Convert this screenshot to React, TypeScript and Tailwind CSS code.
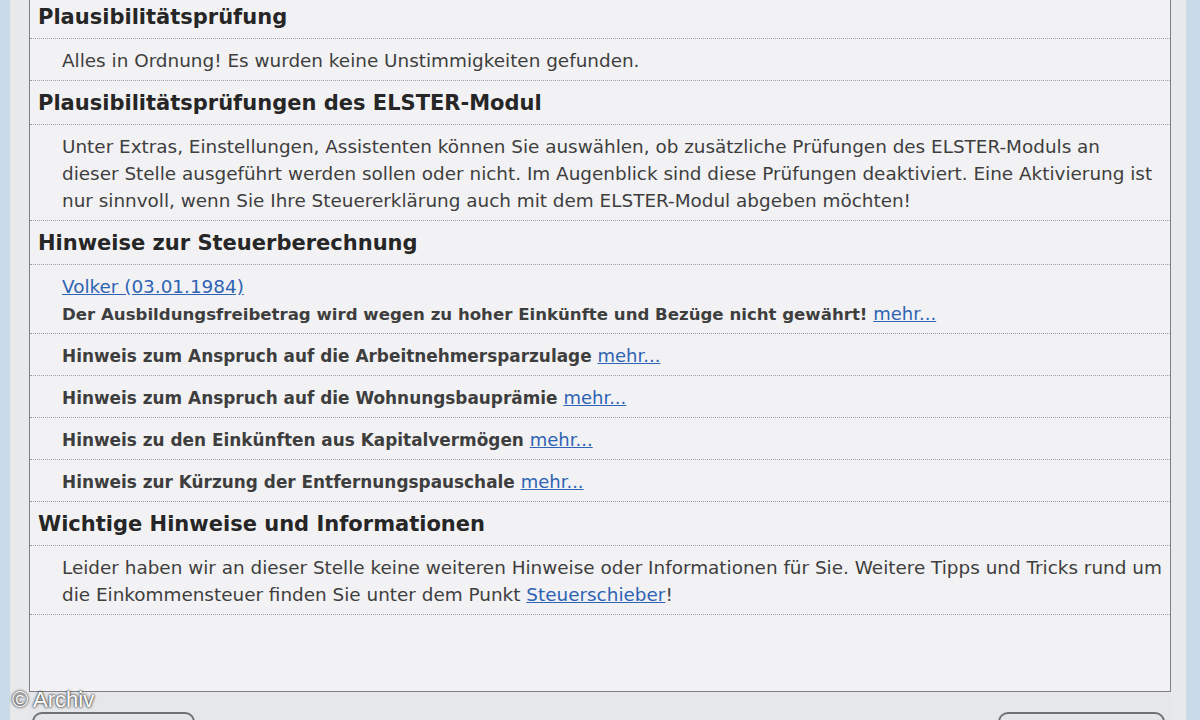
import type { ReactNode } from "react";

const hinweise = [
  "Hinweis zum Anspruch auf die Arbeitnehmersparzulage",
  "Hinweis zum Anspruch auf die Wohnungsbauprämie",
  "Hinweis zu den Einkünften aus Kapitalvermögen",
  "Hinweis zur Kürzung der Entfernungspauschale",
];

function Heading({ children, first }: { children: ReactNode; first?: boolean }) {
  return (
    <div
      className={`border-b border-dotted border-[#9c9ea3] px-[8px] ${first ? "pt-[4px]" : "pt-[9px]"} pb-[7px] text-[21px] font-bold leading-[27px] text-[#262626]`}
    >
      {children}
    </div>
  );
}

function Row({ children }: { children: ReactNode }) {
  return (
    <div className="border-b border-dotted border-[#9c9ea3] pl-[32px] pr-[10px] pt-[8px] pb-[6px] text-[18.4px] leading-[27px] text-[#3e3e3e] whitespace-nowrap">
      {children}
    </div>
  );
}

function Mehr() {
  return <a className="text-[18px] font-normal leading-none text-[#2f63b3] underline">mehr...</a>;
}

export default function App() {
  return (
    <div className="relative flex h-[720px] w-[1200px] overflow-hidden bg-[#e6e7ea] font-['DejaVu_Sans',Verdana,sans-serif]">
      {/* window frame left */}
      <div className="w-[10px] bg-[#c9dbe8]" />
      <div className="w-[19px] bg-[#e8e9eb]" />

      <div className="flex w-[1142px] flex-col">
        {/* report panel */}
        <div className="flex h-[692px] shrink-0 flex-col border-x border-b border-[#7d7f84] bg-[#f2f2f4]">
          <Heading first>Plausibilitätsprüfung</Heading>
          <Row>Alles in Ordnung! Es wurden keine Unstimmigkeiten gefunden.</Row>

          <Heading>Plausibilitätsprüfungen des ELSTER-Modul</Heading>
          <Row>
            Unter Extras, Einstellungen, Assistenten können Sie auswählen, ob zusätzliche Prüfungen des ELSTER-Moduls an
            <br />
            dieser Stelle ausgeführt werden sollen oder nicht. Im Augenblick sind diese Prüfungen deaktiviert. Eine Aktivierung ist
            <br />
            nur sinnvoll, wenn Sie Ihre Steuererklärung auch mit dem ELSTER-Modul abgeben möchten!
          </Row>

          <Heading>Hinweise zur Steuerberechnung</Heading>
          <Row>
            <a className="text-[#2f63b3] underline">Volker (03.01.1984)</a>
            <div>
              <span className="text-[16.6px] font-bold leading-none">
                Der Ausbildungsfreibetrag wird wegen zu hoher Einkünfte und Bezüge nicht gewährt!
              </span>{" "}
              <Mehr />
            </div>
          </Row>
          {hinweise.map((h) => (
            <Row key={h}>
              <span className="text-[16.9px] font-bold leading-none">{h}</span> <Mehr />
            </Row>
          ))}

          <Heading>Wichtige Hinweise und Informationen</Heading>
          <Row>
            Leider haben wir an dieser Stelle keine weiteren Hinweise oder Informationen für Sie. Weitere Tipps und Tricks rund um
            <br />
            die Einkommensteuer finden Sie unter dem Punkt <a className="text-[#2f63b3] underline">Steuerschieber</a>!
          </Row>
        </div>

        {/* dialog buttons, only their tops visible */}
        <div className="mt-[20px] flex justify-between px-[3px]">
          <div className="h-[20px] w-[163px] rounded-t-[10px] border-[2px] border-b-0 border-[#6f7074] bg-[#e4e5e8]" />
          <div className="mr-[3px] h-[20px] w-[167px] rounded-t-[10px] border-[2px] border-b-0 border-[#6f7074] bg-[#e4e5e8]" />
        </div>
      </div>

      {/* window frame right */}
      <div className="w-[15px] bg-[#e8e9eb]" />
      <div className="flex-1 bg-[#c9dbe8]" />

      <span className="absolute left-[12px] top-[683px] font-['Liberation_Sans',Arial,sans-serif] text-[22px] text-white [text-shadow:0_0_2px_#333,0_0_3px_#333]">
        © Archiv
      </span>
    </div>
  );
}
